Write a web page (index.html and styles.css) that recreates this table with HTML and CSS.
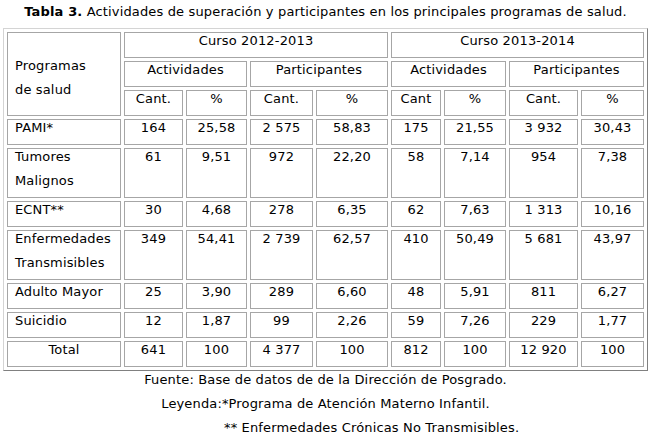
FILE: index.html
```html
<!DOCTYPE html>
<html lang="es">
<head>
<meta charset="utf-8">
<title>Tabla 3</title>
<link rel="stylesheet" href="styles.css">
</head>
<body>
<div class="page">
  <div class="title"><b>Tabla 3.</b> Actividades de superación y participantes en los principales programas de salud.</div>
  <table class="data">
    <colgroup>
      <col class="w0"><col class="w1"><col class="w2"><col class="w3"><col class="w4"><col class="w5"><col class="w6"><col class="w7"><col class="w8">
    </colgroup>
    <tr>
      <td rowspan="3" class="prog">Programas<br>de salud</td>
      <td colspan="4"><div class="c">Curso 2012-2013</div></td>
      <td colspan="4"><div class="c">Curso 2013-2014</div></td>
    </tr>
    <tr>
      <td colspan="2"><div class="c">Actividades</div></td>
      <td colspan="2"><div class="c">Participantes</div></td>
      <td colspan="2"><div class="c">Actividades</div></td>
      <td colspan="2"><div class="c">Participantes</div></td>
    </tr>
    <tr>
      <td><div class="c">Cant.</div></td><td><div class="c">%</div></td>
      <td><div class="c">Cant.</div></td><td><div class="c">%</div></td>
      <td><div class="c">Cant</div></td><td><div class="c">%</div></td>
      <td><div class="c">Cant.</div></td><td><div class="c">%</div></td>
    </tr>
    <tr>
      <td class="name"><div class="c">PAMI*</div></td>
      <td><div class="c">164</div></td><td><div class="c">25,58</div></td>
      <td><div class="c">2 575</div></td><td><div class="c">58,83</div></td>
      <td><div class="c">175</div></td><td><div class="c">21,55</div></td>
      <td><div class="c">3 932</div></td><td><div class="c">30,43</div></td>
    </tr>
    <tr>
      <td class="name"><div class="c">Tumores<br>Malignos</div></td>
      <td><div class="c">61</div></td><td><div class="c">9,51</div></td>
      <td><div class="c">972</div></td><td><div class="c">22,20</div></td>
      <td><div class="c">58</div></td><td><div class="c">7,14</div></td>
      <td><div class="c">954</div></td><td><div class="c">7,38</div></td>
    </tr>
    <tr>
      <td class="name"><div class="c">ECNT**</div></td>
      <td><div class="c">30</div></td><td><div class="c">4,68</div></td>
      <td><div class="c">278</div></td><td><div class="c">6,35</div></td>
      <td><div class="c">62</div></td><td><div class="c">7,63</div></td>
      <td><div class="c">1 313</div></td><td><div class="c">10,16</div></td>
    </tr>
    <tr>
      <td class="name"><div class="c">Enfermedades<br>Transmisibles</div></td>
      <td><div class="c">349</div></td><td><div class="c">54,41</div></td>
      <td><div class="c">2 739</div></td><td><div class="c">62,57</div></td>
      <td><div class="c">410</div></td><td><div class="c">50,49</div></td>
      <td><div class="c">5 681</div></td><td><div class="c">43,97</div></td>
    </tr>
    <tr>
      <td class="name"><div class="c">Adulto Mayor</div></td>
      <td><div class="c">25</div></td><td><div class="c">3,90</div></td>
      <td><div class="c">289</div></td><td><div class="c">6,60</div></td>
      <td><div class="c">48</div></td><td><div class="c">5,91</div></td>
      <td><div class="c">811</div></td><td><div class="c">6,27</div></td>
    </tr>
    <tr>
      <td class="name"><div class="c">Suicidio</div></td>
      <td><div class="c">12</div></td><td><div class="c">1,87</div></td>
      <td><div class="c">99</div></td><td><div class="c">2,26</div></td>
      <td><div class="c">59</div></td><td><div class="c">7,26</div></td>
      <td><div class="c">229</div></td><td><div class="c">1,77</div></td>
    </tr>
    <tr>
      <td><div class="c">Total</div></td>
      <td><div class="c">641</div></td><td><div class="c">100</div></td>
      <td><div class="c">4 377</div></td><td><div class="c">100</div></td>
      <td><div class="c">812</div></td><td><div class="c">100</div></td>
      <td><div class="c">12 920</div></td><td><div class="c">100</div></td>
    </tr>
  </table>
  <div class="notes">
    <p class="center">Fuente: Base de datos de de la Dirección de Posgrado.</p>
    <p class="center">Leyenda:*Programa de Atención Materno Infantil.</p>
    <p class="indent">** Enfermedades Crónicas No Transmisibles.</p>
  </div>
</div>
</body>
</html>
```
FILE: styles.css
```css
html, body {
  margin: 0;
  padding: 0;
  background: #ffffff;
}
body {
  font-family: "DejaVu Sans", Verdana, sans-serif;
  font-size: 13px;
  letter-spacing: 0.15px;
  color: #000000;
}
.page {
  width: 645px;
  margin-left: 3px;
}
.title {
  text-align: center;
  line-height: 24px;
  margin-bottom: 4px;
  white-space: nowrap;
}
.data {
  width: 645px;
  table-layout: fixed;
  border-collapse: separate;
  border-spacing: 3px;
  border: 1px solid;
  border-color: #d4d4d4 #808080 #808080 #d4d4d4;
}
.w0 { width: 114px; }
.w1 { width: 59px; }
.w2 { width: 61px; }
.w3 { width: 63px; }
.w4 { width: 72px; }
.w5 { width: 50px; }
.w6 { width: 62px; }
.w7 { width: 69px; }
.w8 { width: 63px; }
.data td {
  border: 1px solid #a6a6a6;
  padding: 0;
  text-align: center;
  vertical-align: top;
  line-height: 24px;
  white-space: nowrap;
}
.data td .c {
  margin: -4px 0 4px;
}
.data td.name {
  text-align: left;
  padding-left: 7px;
}
.data td.prog {
  text-align: left;
  padding-left: 7px;
  padding-top: 21px;
}
.notes p {
  margin: 0 0 6px;
  line-height: 18px;
  white-space: nowrap;
}
.notes .center {
  text-align: center;
}
.notes .indent {
  text-align: left;
  padding-left: 221px;
}
```
